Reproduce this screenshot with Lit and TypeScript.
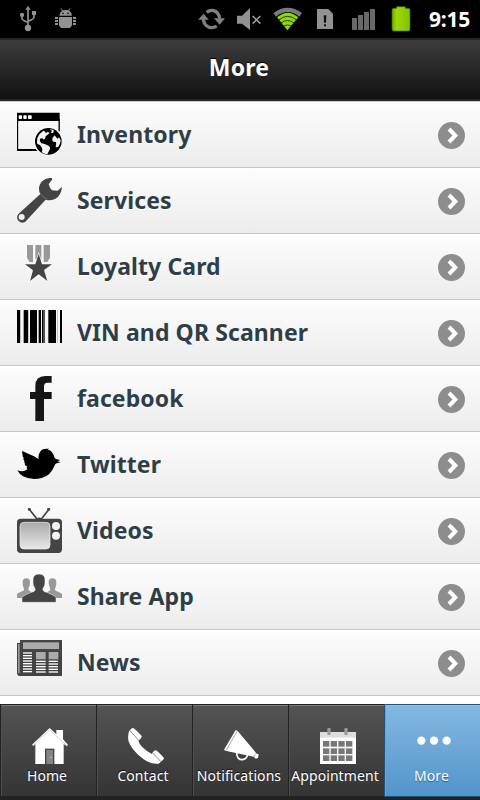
import { LitElement, html, svg, css, type TemplateResult } from "lit";
import { customElement, property } from "lit/decorators.js";

const glyph = (box: string, w: number, h: number, body: unknown): TemplateResult =>
  html`<svg viewBox=${box} width=${w} height=${h} aria-hidden="true">${body}</svg>`;

/* Row icons: 45px squares drawn on a 135 unit grid */
const row = (body: unknown) => glyph("0 0 135 135", 45, 45, body);

const inventory = row(svg`
  <path d="M0 2H128V27H0Z"/><path d="M1.500 20V115H66M126.500 20V58" fill="none" stroke="#000" stroke-width="4"/>
  <path d="M0 111H57V117H0Z"/>
  <g fill="#fff"><rect x="5" y="10" width="10" height="11" rx="2"/><rect x="19" y="10" width="10" height="11" rx="2"/><rect x="33" y="10" width="11" height="11" rx="2"/></g>
  <circle cx="94" cy="88" r="44" fill="#fafafa"/><circle cx="94" cy="88" r="40"/>
  <path fill="#f4f4f4" d="M79 56Q66 64 61 78Q59 90 61 96Q70 97 74 106Q78 114 74 121Q83 127 91 127Q95 118 99 111Q101 103 90 99Q80 95 73 94Q66 88 69 80Q75 76 81 83L85 78Q84 72 91 69L98 63L92 59L87 64L83 58ZM98 52L105 56L101 62L108 63L111 56Q107 52 98 52ZM113 70Q105 76 106 86Q109 91 117 90Q119 98 116 104Q120 108 125 103Q131 94 131 85L126 76L121 80Z"/>`);

const services = row(svg`
  <path fill="#444" d="M104 0Q86 -1 76 9Q66 19 66 33Q66 41 70 48L4 108Q-3 117 3 127Q12 139 25 131L86 65Q99 69 114 63Q133 53 135 26L122 38L105 37Q98 30 95 19L106 4Z"/>
  <circle cx="14" cy="117" r="9" fill="#f0f0f0"/><path d="M69 44Q76 59 91 64" fill="none" stroke="#999" stroke-width="1.500"/>`);

const loyalty = row(svg`
  <g fill="#999"><path d="M30 3H48V54H38L30 41Z"/><path d="M55 3H73V45H55Z"/><path d="M80 3H99V41L91 54H80Z"/></g>
  <path d="M65 25L76 57L111 58L82 78L94 116L65 95L35 116L46 79L18 58L54 57Z" fill="#fafafa"/>
  <path d="M65 30L75 61H105L81 78L91 111L65 91L39 111L48 79L24 61H55Z" fill="#444"/>`);

const barcode = row(svg`
  <path d="M0 0H9V99H0ZM20 0H33V99H20ZM39 0H60V99H39ZM65 0H72V99H65ZM75 0H80V99H75ZM82 0H84V99H82ZM94 0H117V99H94ZM129 0H135V99H129Z"/>
  <path d="M9 0H11V99H9ZM34 0H36V99H34ZM120 0H122V99H120Z" fill="#aaa"/>`);

const facebook = row(svg`
  <path fill="#161616" d="M104 0V20H91Q81 20 81 32V48H104V69H81V135H55V69H39V48H55V30Q55 0 85 0Z"/>`);

const twitter = row(svg`
  <path d="M1 85Q18 92 31 82Q27 76 31 73Q22 70 24 65Q21 62 22 56Q17 51 20 47Q15 43 17 39Q14 34 16 27Q33 35 51 43Q60 49 65 51Q62 37 73 25Q79 20 85 21L89 19L88 22L95 19L93 23Q107 25 113 48L119 52L130 54L121 58L131 61L119 64Q115 64 112 72Q101 101 74 108Q44 116 18 103Q8 98 1 85Z"/>`);

const videos = row(svg`
  <defs><linearGradient id="screen" x1="0" y1="0" x2="0" y2="1"><stop offset="0" stop-color="#aaa"/><stop offset="1" stop-color="#e7e7e7"/></linearGradient></defs>
  <path d="M38 5L60 33M95 5L73 33" stroke="#444" stroke-width="5" fill="none"/><circle cx="37" cy="4" r="4.500" fill="#444"/><circle cx="95" cy="4" r="4.500" fill="#444"/>
  <path d="M55 33Q66 24 78 33Z" fill="#444"/><rect y="32" width="135" height="103" rx="11" fill="#444"/>
  <rect x="9" y="43" width="90" height="80" rx="12" fill="url(#screen)" stroke="#f3f3f3" stroke-width="2"/>
  <circle cx="117" cy="54" r="12" fill="#f4f4f4"/><circle cx="117" cy="83" r="12" fill="#f4f4f4"/>`);

const share = row(svg`
  <g fill="#999"><path d="M0 72V60Q5 56 19 50Q23 47 20 41Q16 35 17 24Q17 13 28 13Q39 13 39 24Q40 35 35 41Q33 46 36 50L54 59V72Z"/>
  <path d="M135 72V60Q130 56 116 50Q112 47 115 41Q119 35 118 24Q118 13 106 13Q95 13 95 24Q95 35 99 41Q101 46 98 50L80 59V72Z"/></g>
  <path fill="#444" stroke="#f8f8f8" stroke-width="1.500" d="M15 85V70Q21 63 49 53Q58 50 53 41Q47 35 48 20Q47 0 66 0Q85 0 84 20Q85 35 79 41Q74 49 83 53Q111 63 117 70V85Z"/>`);

const stripes = (x: number, w: number, from: number) =>
  Array.from({ length: Math.floor((98 - from) / 8) + 1 }, (_, i) =>
    svg`<rect x=${x} y=${from + i * 8} width=${w} height="4" fill="#fff"/>`);

const news = row(svg`
  <path d="M9 0H135V108H6Q0 107 0 100V9H9Z" fill="#444"/><path d="M3 12V98Q6 104 8 96V12Z" fill="#999"/>
  <rect x="18" y="7" width="108" height="20" fill="#aaa"/><path d="M57 36H86V58H57ZM95 36H124V58H95Z" fill="#aaa"/>
  ${stripes(18, 27, 37)}${stripes(57, 29, 62)}${stripes(95, 28, 62)}`);

const rows: Array<[string, TemplateResult]> = [
  ["Inventory", inventory], ["Services", services], ["Loyalty Card", loyalty],
  ["VIN and QR Scanner", barcode], ["facebook", facebook], ["Twitter", twitter],
  ["Videos", videos], ["Share App", share], ["News", news],
];

/* Tab icons: 36px squares drawn on a 108 unit grid */
const tab = (body: unknown) => glyph("0 0 108 108", 36, 36, body);

const home = tab(svg`
  <path fill="#fff" d="M73 6H93V34L108 50L104 55L95 48V108H10V48L4 54L0 50L53 0L73 19Z"/>
  <path d="M4 52L53 6L104 53" fill="none" stroke="#aaa" stroke-width="1.500"/>
  <rect x="39" y="62" width="28" height="46" fill="#444"/><rect x="43" y="66" width="20" height="42" fill="#858585"/><circle cx="57" cy="88" r="2" fill="#eee"/>`);
const phone = tab(svg`
  <path fill="#fff" d="M15 0Q19 0 41 24Q43 28 31 38Q36 58 72 78Q77 67 83 67Q88 68 108 90Q109 94 92 107Q69 110 46 93Q12 68 1 38Q-1 16 4 8Q10 1 15 0Z"/>
  <path d="M5 7L32 37M75 76L99 101" stroke="#505050" stroke-width="2"/>`);
const horn = tab(svg`
  <path d="M38 74Q39 96 56 95Q69 92 70 81" fill="none" stroke="#fff" stroke-width="5"/>
  <path fill="#fff" d="M35 6L41 9L98 77L104 79L102 90L95 92L89 86L4 68L0 65Z"/>
  <path d="M39 10L6 68M94 77L91 86" stroke="#555" stroke-width="1.500"/>`);
const calendar = tab(svg`
  <rect y="12" width="108" height="96" fill="#fff"/><rect y="12" width="108" height="17" fill="#ddd"/>
  <rect x="22" y="0" width="10" height="21" rx="3" fill="#999"/><rect x="73" y="0" width="10" height="21" rx="3" fill="#999"/>
  ${[39, 61, 82].map((y) => [9, 32, 55, 78].map((x) => svg`<rect x=${x} y=${y} width="19" height="17" fill="#777"/>`))}`);
const dots = tab(svg`
  <g fill="#fff"><circle cx="16" cy="38" r="12.500"/><circle cx="54" cy="38" r="12.500"/><circle cx="92" cy="38" r="12.500"/></g>`);

const tabs: Array<[string, TemplateResult]> = [
  ["Home", home], ["Contact", phone], ["Notifications", horn], ["Appointment", calendar], ["More", dots],
];

/* Status icons: full bar height, three units to the pixel */
const usb = glyph("54 0 60 114", 20, 38, svg`
  <g fill="none" stroke="#929292" stroke-width="5"><path d="M84 24V82M66 48V56Q66 60 84 67M102 42V52Q101 57 84 64"/></g>
  <g fill="#929292"><path d="M84 17L92 29H76Z"/><circle cx="84" cy="84" r="9.500"/><circle cx="66" cy="45" r="6.500"/><rect x="96" y="33" width="12" height="12"/></g>`);
const debug = glyph("162 0 72 114", 24, 38, svg`
  <g fill="#929292"><path d="M178 47Q180 30 197 30Q214 30 216 47Z"/><path d="M177 51H216V74Q214 84 204 84H189Q179 84 177 74Z"/>
  <path d="M165 51H174V57H165ZM165 60H174V66H165ZM165 69H174V75H165ZM219 51H228V57H219ZM219 60H228V66H219ZM219 69H228V75H219Z"/></g>
  <path d="M183 25L188 33M210 25L205 33" stroke="#929292" stroke-width="3"/><circle cx="189" cy="40" r="2.500"/><circle cx="204" cy="40" r="2.500"/>`);
const sync = glyph("21 0 87 114", 29, 38, svg`
  <g fill="none" stroke="#808080" stroke-width="10"><path d="M50 37Q60 29 71 32Q87 37 89 56"/><path d="M80 78Q70 85 58 82Q41 76 40 57"/></g>
  <path fill="#808080" d="M24 59L41 41L56 59ZM72 55H105L89 74Z"/>`);
const mute = glyph("138 0 78 114", 26, 38, svg`
  <path fill="#929292" d="M141 47H156L180 24V90L156 71H141Z"/><path d="M188 48L211 71M211 48L188 71" stroke="#999" stroke-width="5"/>`);
const wifi = glyph("246 0 93 114", 31, 38, svg`
  <path fill="#7a7a7a" d="M250 39Q293 8 336 39L328 50Q293 22 258 50Z"/>
  <path fill="#8fd40c" d="M261 52Q293 24 325 52L292 91Z"/>
  <path fill="none" stroke="#234400" stroke-width="3" d="M266 60Q293 38 320 60M273 69Q293 54 312 69M281 78Q293 71 304 78"/>`);
const sim = glyph("378 0 54 114", 18, 38, svg`
  <path fill="#929292" d="M381 27H415L429 41V87H381Z"/><path fill="#111" d="M401 46H409L408 68H402ZM402 73H408V79H402Z"/>`);
const signal = glyph("483 0 75 114", 25, 38, svg`
  <path fill="#696969" d="M486 54H501V90H486ZM504 45H519V90H504ZM522 36H537V90H522ZM540 27H555V90H540Z"/>`);
const battery = glyph("600 0 66 114", 22, 38, svg`
  <defs><linearGradient id="charge"><stop offset="0" stop-color="#6da500"/><stop offset=".25" stop-color="#a0d800"/><stop offset="1" stop-color="#82c000"/></linearGradient></defs>
  <path fill="url(#charge)" stroke="#3f7000" stroke-width="2" d="M620 25V20H646V25H655Q660 25 660 31V88Q660 93 655 93H611Q606 93 606 88V31Q606 25 611 25Z"/>`);

@customElement("status-bar")
class StatusBar extends LitElement {
  static styles = css`
    :host { display: flex; height: 38px; background: #000; color: #fff; padding-left: 18px; font-size: 21px; font-weight: 700; }
    svg { display: block; flex: none; }
    .debug { margin-left: 16px; }
    .right { display: flex; margin-left: 119px; }
    .mute, .wifi { margin-left: 10px; }
    .sim { margin-left: 13px; }
    .signal { margin-left: 17px; }
    .battery { margin-left: 14px; }
    .time { margin-left: 17px; line-height: 38px; letter-spacing: -0.2px; }
  `;
  render() {
    return html`${usb}<span class="debug">${debug}</span>
      <div class="right">${sync}<span class="mute">${mute}</span><span class="wifi">${wifi}</span><span class="sim">${sim}</span><span class="signal">${signal}</span><span class="battery">${battery}</span><span class="time">9:15</span></div>`;
  }
}

@customElement("menu-row")
class MenuRow extends LitElement {
  @property() label = "";
  @property({ attribute: false }) icon?: TemplateResult;
  static styles = css`
    :host { display: flex; box-sizing: border-box; height: 66px; padding: 0 15px 0 17px; border-bottom: 1px solid #c6c6c6; box-shadow: inset 0 1px #fff; background: linear-gradient(#fdfdfd, #ececec); color: #2f3e46; }
    svg { display: block; }
    .icon { margin-top: 10px; width: 45px; }
    .label { flex: 1; margin-left: 15px; font-size: 23px; line-height: 64px; font-weight: 700; letter-spacing: 0.1px; white-space: nowrap; text-shadow: 0 1px #fff; }
    .arrow { margin-top: 20px; }
  `;
  render() {
    return html`<span class="icon">${this.icon}</span><span class="label">${this.label}</span>
      <span class="arrow">${glyph("0 0 81 81", 27, 27, svg`<circle cx="40.500" cy="40.500" r="40.500" fill="#8d8d8d"/><path d="M33 21L52 40.500L33 60" fill="none" stroke="#fff" stroke-width="12"/>`)}</span>`;
  }
}

@customElement("tab-item")
class TabItem extends LitElement {
  @property() label = "";
  @property({ attribute: false }) icon?: TemplateResult;
  @property({ type: Boolean, reflect: true }) active = false;
  static styles = css`
    :host { display: flex; flex-direction: column; align-items: center; box-sizing: border-box; height: 93px; padding-right: 3px; background: linear-gradient(#545454, #343434); border: 1px solid #222; border-right-width: 0; box-shadow: inset 0 1px #7d7d7d, inset 1px 0 #505050; color: #fff; min-width: 0; }
    :host([active]) { background: linear-gradient(#85b8e2, #5295cb); border-color: #1f5277; box-shadow: inset 0 1px #93c2e8, inset 1px 0 #6ba7d8; padding-right: 2px; }
    .icon { margin: 23px 0 0 6px; height: 36px; }
    .label { margin-top: 3px; font-size: 14px; line-height: 18px; letter-spacing: 0.08px; white-space: nowrap; text-shadow: 0 -1px 1px #111; }
    :host([active]) .label { text-shadow: 0 1px 1px #245c88; }
    :host([active]) .icon { margin-left: 4px; }
  `;
  render() {
    return html`<span class="icon">${this.icon}</span><span class="label">${this.label}</span>`;
  }
}

@customElement("app-root")
class AppRoot extends LitElement {
  static styles = css`
    :host { display: flex; flex-direction: column; width: 480px; height: 800px; overflow: hidden; background: #fff; font-family: "Noto Sans", "Open Sans", sans-serif; }
    .title { flex: none; box-sizing: border-box; height: 63px; margin: 0; border: solid #252525; border-width: 2px 0; background: linear-gradient(#3d3d3d, #111); color: #fff; text-align: center; font-size: 23px; font-weight: 700; line-height: 55px; letter-spacing: 0.2px; text-shadow: 0 -1px 1px #000; padding-right: 2px; }
    .list { flex: 1; border-top: 1px solid #ccc; }
    .tabs { flex: none; display: grid; grid-template-columns: repeat(5, 96px); height: 96px; background: #222; }
  `;
  render() {
    return html`<status-bar></status-bar>
      <h1 class="title">More</h1>
      <div class="list">${rows.map(([label, icon]) => html`<menu-row .label=${label} .icon=${icon}></menu-row>`)}</div>
      <nav class="tabs">${tabs.map(([label, icon]) => html`<tab-item .label=${label} .icon=${icon} ?active=${label === "More"}></tab-item>`)}</nav>`;
  }
}
